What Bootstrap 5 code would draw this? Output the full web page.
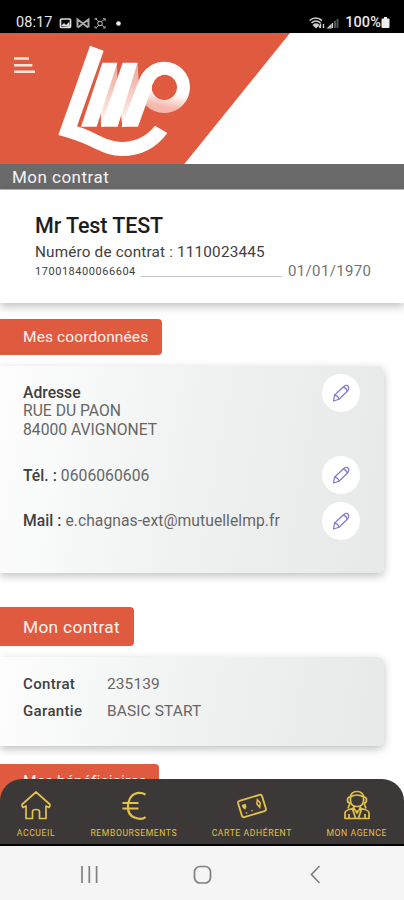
<!DOCTYPE html>
<html lang="fr">
<head>
<meta charset="utf-8">
<meta name="viewport" content="width=device-width, initial-scale=1">
<title>Mon contrat</title>
<link href="https://cdn.jsdelivr.net/npm/bootstrap@5.3.0/dist/css/bootstrap.min.css" rel="stylesheet">
<style>
  :root { --brand: #e05a40; --gold: #e3c14d; --ink: #3c3837; }
  body { font-family: Roboto, "Liberation Sans", sans-serif; color: #666; background: #fff; }
  .phone { width: 404px; height: 900px; }
  .phone span, .phone h1, .phone h2, .phone div { white-space: nowrap; }
  .status { height: 33px; background: #000; color: #e8e8e8; padding: 13px 14px 0 16px; font-size: 14.5px; line-height: 20px; letter-spacing: .1px; }
  .status svg { margin-top: -1px; }
  .banner { height: 131px; }
  .page-title { height: 26px; background: #6a6a6a; color: #f4f4f4; padding-left: 12px; font-size: 17px; line-height: 26px; letter-spacing: .48px; border-bottom: 1px solid #bcbcbc; }
  .person { height: 113px; padding: 22px 33px 0 35px; color: #404040; box-shadow: 0 3px 9px rgba(0,0,0,.27); }
  .person h2 { font-size: 21.5px; line-height: 27px; color: #1d1d1d; letter-spacing: -.1px; }
  .number { font-size: 15.3px; line-height: 19px; margin-top: 4px; letter-spacing: .17px; }
  .dob-row { height: 17px; }
  .ref { font-size: 11px; line-height: 16px; letter-spacing: .54px; padding-top: 2px; }
  .leader { border-bottom: 1px solid #c4c4c4; margin: 0 6px 0 5px; height: 12px; }
  .dob { font-size: 15px; line-height: 16px; color: #737373; letter-spacing: .36px; margin-right: -.4px; }
  .tag { background: var(--brand); color: #fff3ee; padding-left: 23px; border-radius: 0 4px 4px 0; }
  .tag-a { width: 162px; height: 36px; margin-top: 16px; font-size: 15.5px; line-height: 37px; letter-spacing: .11px; }
  .tag-b { width: 134px; height: 39px; margin-top: 34px; font-size: 17.3px; line-height: 40px; letter-spacing: .33px; }
  .tag-c { width: 159px; height: 36px; margin-top: 18px; font-size: 15.5px; line-height: 35px; letter-spacing: .1px; }
  .panel { width: 384px; border-radius: 0 6px 6px 0; background: linear-gradient(100deg, #fdfdfd 0%, #f1f3f3 45%, #e7e9e9 100%); box-shadow: 0 3px 8px rgba(0,0,0,.25); padding-left: 23px; font-size: 15.7px; }
  .panel b { font-weight: 500; color: #404040; }
  .contact { height: 207px; margin-top: 11px; padding-top: 8px; padding-right: 24px; line-height: 18.5px; }
  .contact .line-b { letter-spacing: .04px; }
  .edit { width: 38px; height: 38px; background: #fff; }
  .line-a { height: 82px; }
  .line-b { height: 45.5px; }
  .line-a .copy { padding-top: 9.5px; }
  .line-b .copy { padding-top: 10.5px; }
  .policy { height: 89px; margin-top: 11px; padding-top: 13.5px; line-height: 27.5px; font-size: 15.5px; }
  .policy span { letter-spacing: .1px; }
  .policy b { width: 84px; font-size: 15px; letter-spacing: .35px; }
  .tabs { top: 779px; left: 0; width: 404px; height: 67px; padding: 0 17px 0 16px; background: var(--ink); border-bottom: 2px solid #000; border-radius: 22px 22px 0 0; color: var(--gold); font-size: 8.6px; line-height: 14px; letter-spacing: .6px; }
  .tabs svg { width: 40px; height: 40px; margin-top: 7px; }
  .tab { flex: none; }
  .sysnav { top: 846px; left: 0; width: 404px; height: 54px; background: #f5f5f5; }
</style>
</head>
<body>
<main class="phone position-relative overflow-hidden">
  <div class="status d-flex justify-content-between">
    <div class="d-flex">
      <span>08:17</span>
      <svg width="72" height="21" viewBox="52 12 72 21" fill="none" stroke="#ddd">
        <rect x="59.5" y="19" width="10" height="8.5" rx="1" stroke-width="1.7"/>
        <path d="M60 26l3-3 2 2 3-3 1 5z" fill="#ddd" stroke="none"/>
        <path d="M76.500 27.500v-8l5.500 4 5.500-4v8M77 27.500l5-4 5 4" stroke-width="2" stroke="#aaa"/>
        <path d="M94 20v-1.500h2M102 18.500h2.200V21M94 26v2h2M102 28h2.200v-2" stroke="#999"/>
        <path d="M95 19l3 3M98 25l-3 3M101 21l3-2M101 25l3 3" stroke="#aaa"/>
        <circle cx="99" cy="23.500" r="2.300" stroke="#ccc"/>
        <circle cx="117.500" cy="23.500" r="2.300" fill="#eee" stroke="none"/>
      </svg>
    </div>
    <div class="d-flex">
      <svg width="32" height="21" viewBox="309 12 32 21" fill="none" stroke="#d0d0d0" stroke-width="1.600">
        <path d="M309.500 20.500q6.200-5 12.500 0M311.500 22.800q4.500-3.500 9 0M313.500 25q2.500-2 5 0"/>
        <path d="M316 27.500l-2-2h4zM320.500 23.500v4.500M319 26l1.500 2M323.500 24v4" stroke-width="1.400"/>
        <path d="M328 28h3v-3zM332.500 28v-5" stroke-width="1.200"/>
        <path d="M335 28v-7M337.500 28v-9" stroke="#555" stroke-width="2"/>
      </svg>
      <span class="ms-1 fw-medium">100%</span>
      <svg width="9" height="21" viewBox="381 12 9 21"><path d="M384 17h3v1.500h1.500q1 0 1 1V27q0 1-1 1h-6q-1 0-1-1v-7.500q0-1 1-1H384z" fill="#eee"/></svg>
    </div>
  </div>

  <svg class="banner d-block" width="404" height="131" viewBox="0 9 1212 393" role="img" aria-label="LMP">
    <defs>
      <linearGradient id="fold" x1="0" y1="0" x2="0" y2="1"><stop offset="0" stop-color="#eda295"/><stop offset=".55" stop-color="#f7d2ca"/><stop offset="1" stop-color="#fff"/></linearGradient>
      <linearGradient id="ring" x1=".65" y1="0" x2=".45" y2="1"><stop offset=".62" stop-color="#fff"/><stop offset="1" stop-color="#f3b9ae"/></linearGradient>
    </defs>
    <path d="M0 9H870L553 402H0z" fill="#e05a40"/>
    <path d="M42 85.500H87M42 105.500H97M42 125.500H105" stroke="#fbe3dc" stroke-width="7.500"/>
    <path d="M270 47L311 62L231 289C285 303 315 337 370 336Q430 332 465 287L502 309Q452 378 366 378C305 378 280 342 175 315z" fill="#fff"/>
    <path d="M351 98L352 150L310 290H303L302 232z" fill="url(#fold)"/>
    <path d="M413 98L416 158L375 290H367L362 240z" fill="url(#fold)"/>
    <path d="M307 98H352L290 290H243z" fill="#fff"/>
    <path d="M368 98H413L353 290H303z" fill="#fff"/>
    <circle cx="493" cy="172" r="57.500" fill="none" stroke="url(#ring)" stroke-width="39"/>
    <path d="M365 290L417 150Q430 112 475 97L488 134Q458 142 452 184L414 290z" fill="#fff"/>
  </svg>
  <h1 class="page-title m-0 fw-normal">Mon contrat</h1>

  <section class="person">
    <h2 class="m-0 fw-medium">Mr Test TEST</h2>
    <div class="number">Numéro de contrat : 1110023445</div>
    <div class="dob-row d-flex align-items-center">
      <span class="ref">170018400066604</span><span class="leader flex-grow-1"></span><span class="dob">01/01/1970</span>
    </div>
  </section>

  <h2 class="tag tag-a mb-0 fw-normal">Mes coordonnées</h2>
  <section class="panel contact">
    <svg class="d-none"><symbol id="pencil" viewBox="0 0 38 38"><g fill="none" stroke="#8478cf" stroke-width="1.200" stroke-linejoin="round"><path d="M11.500 27L12.500 21.300L21.500 12.700Q24.500 10.500 26.200 12.200Q27.600 14 25.800 16.700L17 25.300z"/><path d="M12.500 21.300Q16.500 21.500 17 25.300M21 13.200Q24.500 14 25.200 17.200"/></g></symbol></svg>
    <div class="line-a d-flex justify-content-between align-items-start">
      <div class="copy"><b>Adresse</b><br>RUE DU PAON<br>84000 AVIGNONET</div>
      <svg class="edit rounded-circle"><use href="#pencil"/></svg>
    </div>
    <div class="line-b d-flex justify-content-between align-items-start">
      <div class="copy"><b>Tél. :</b> <span>0606060606</span></div>
      <svg class="edit rounded-circle"><use href="#pencil"/></svg>
    </div>
    <div class="line-b d-flex justify-content-between align-items-start">
      <div class="copy"><b>Mail :</b> <span>e.chagnas-ext@mutuellelmp.fr</span></div>
      <svg class="edit rounded-circle"><use href="#pencil"/></svg>
    </div>
  </section>

  <h2 class="tag tag-b mb-0 fw-normal">Mon contrat</h2>
  <section class="panel policy">
    <div class="d-flex"><b>Contrat</b><span>235139</span></div>
    <div class="d-flex"><b>Garantie</b><span>BASIC START</span></div>
  </section>

  <h2 class="tag tag-c mb-0 fw-normal">Mes bénéficiaires</h2>

  <nav class="tabs position-absolute d-flex justify-content-between">
    <div class="tab d-flex flex-column align-items-center">
      <svg viewBox="0 0 40 40" fill="none" stroke="currentColor" stroke-width="1.700" stroke-linejoin="round"><path d="M20 6L6 18.500Q5.500 20 7 21.500L10 20V32.500H16.500V25.500Q16.500 23.500 20 23.500T23.500 25.500V32.500H30V20L33 21.500Q34.500 20 34 18.500z"/></svg>
      <span>ACCUEIL</span>
    </div>
    <div class="tab d-flex flex-column align-items-center">
      <svg viewBox="0 0 40 40" fill="none" stroke="currentColor" stroke-width="2.200"><path d="M31.500 8.500Q26 5.500 20.500 8T14 19.500T20.500 31.500T31.500 31M8.500 17H24.500M8.500 22.500H24.500"/></svg>
      <span>REMBOURSEMENTS</span>
    </div>
    <div class="tab d-flex flex-column align-items-center">
      <svg viewBox="0 0 40 40" fill="none" stroke="currentColor" stroke-width="1.800"><g transform="rotate(-17 20 20)"><rect x="7.500" y="11.500" width="25" height="17" rx="2"/><path d="M27 15.500l1.800 4-1.800 4-1.800-4z" stroke-width="1.500"/><path d="M10.500 16h4v3l-2 2.500-2-2.500z" fill="currentColor" stroke="none"/><path d="M12 25h1.500M18 24.500h1.500" stroke-width="1.200"/></g></svg>
      <span>CARTE ADHÉRENT</span>
    </div>
    <div class="tab d-flex flex-column align-items-center">
      <svg viewBox="0 0 40 40" fill="none" stroke="currentColor" stroke-width="1.700"><path d="M13 12Q14 5.500 20 5.500T27 12M13 11Q10.500 11 10.500 14T13 17M27 11Q29.500 11 29.500 14T27 17M13.500 11Q20 7 26.500 11V15Q26 20.500 20 20.500T13.500 15z"/><path d="M13 17L11 22.500M27 17L29 22.500M17 20v3l3 3 3-3v-3M8 33V27Q8 24 16 22.500M32 33V27Q32 24 24 22.500M8 32.500H32M15.500 23L18.500 32M24.500 23L21.500 32M12 28v4M28 28v4M16 21l4 6 4-6"/></svg>
      <span>MON AGENCE</span>
    </div>
  </nav>
  <div class="sysnav position-absolute">
    <svg class="d-block" width="404" height="54" fill="none" stroke="#808080" stroke-width="1.700"><path d="M82 20V37M89.300 20V37M96.600 20V37M319.500 20L311.500 28.500L319.500 37"/><rect x="194.500" y="20.500" width="16" height="16.500" rx="5.500"/></svg>
  </div>
</main>
<script src="https://cdn.jsdelivr.net/npm/bootstrap@5.3.0/dist/js/bootstrap.bundle.min.js"></script>
</body>
</html>
